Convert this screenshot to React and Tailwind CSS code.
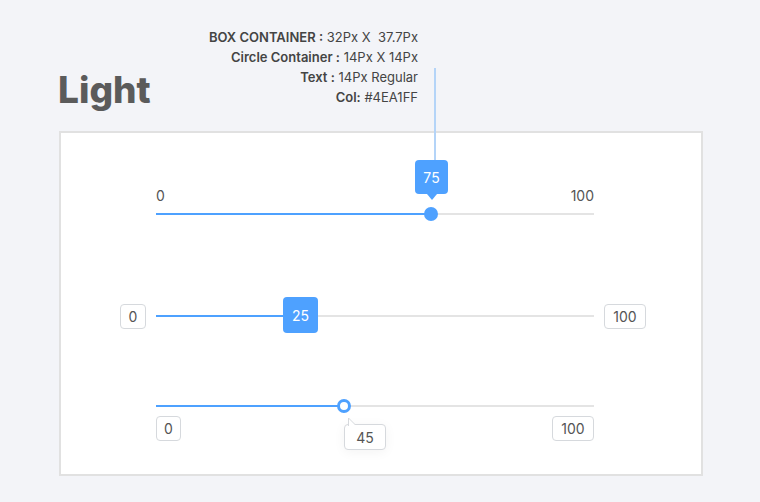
import React from "react";

const BLUE = "bg-[#4EA1FF]";

const ValueBox = ({ children, className = "" }) => (
  <div
    className={`h-[25px] px-[7px] flex items-center justify-center rounded-[4px] border border-[#d6d9dd] bg-white text-[14px] text-[#555] ${className}`}
  >
    {children}
  </div>
);

const App = () => {
  return (
    <div
      className="w-[760px] h-[502px] bg-[#f3f4f8] relative overflow-hidden"
      style={{ fontFamily: "Inter, 'Open Sans', sans-serif" }}
    >
      {/* connector line from the annotation to the first tooltip */}
      <div className="absolute left-[434px] top-[68px] w-[2px] h-[94px] bg-[#b4d4f8]" />

      {/* header */}
      <div className="flex items-start w-[418px] pl-[58px] pt-[27px] h-[131px]">
        <h1 className="mt-[43px] text-[37px] leading-[40px] font-extrabold text-[#5b5b5b]">
          Light
        </h1>
        <div className="ml-auto text-right text-[13px] leading-[20px] text-[#444]">
          <p>
            <span className="font-semibold">BOX CONTAINER :</span> 32Px X&nbsp; 37.7Px
          </p>
          <p>
            <span className="font-semibold">Circle Container :</span> 14Px X 14Px
          </p>
          <p>
            <span className="font-semibold">Text :</span> 14Px Regular
          </p>
          <p>
            <span className="font-semibold">Col:</span> #4EA1FF
          </p>
        </div>
      </div>

      {/* card */}
      <div className="ml-[59px] w-[644px] h-[345px] border-2 border-[#e1e1e1] bg-white pt-[52px]">
        {/* slider 1 */}
        <div className="ml-[95px] w-[438px]">
          <div className="flex justify-between h-[22px] text-[14px] leading-[22px] text-[#555]">
            <span>0</span>
            <span>100</span>
          </div>
          <div className="relative mt-[6px] h-[2px] bg-[#e4e4e4]">
            <div className={`h-full w-[275px] ${BLUE}`} />
            <div className={`absolute left-[268px] top-[-6px] w-[14px] h-[14px] rounded-full ${BLUE}`} />
            <div className="absolute left-[259px] top-[-53px] flex flex-col items-center">
              <div className={`w-[33px] h-[34px] rounded-[4px] ${BLUE} flex items-center justify-center text-[14px] text-white`}>
                75
              </div>
              <div className="w-0 h-0 border-l-[5px] border-r-[5px] border-t-[6px] border-l-transparent border-r-transparent border-t-[#4EA1FF]" />
            </div>
          </div>
        </div>

        {/* slider 2 */}
        <div className="mt-[83px] ml-[59px] flex items-center h-[36px]">
          <ValueBox className="w-[26px]">0</ValueBox>
          <div className="relative mx-[10px] w-[438px] h-[2px] bg-[#e4e4e4]">
            <div className={`h-full w-[130px] ${BLUE}`} />
            <div
              className={`absolute left-[127px] top-[-18px] w-[35px] h-[36px] rounded-[4px] ${BLUE} flex items-center justify-center text-[14px] text-white`}
            >
              25
            </div>
          </div>
          <ValueBox className="w-[42px]">100</ValueBox>
        </div>

        {/* slider 3 */}
        <div className="mt-[71px] ml-[95px] w-[438px]">
          <div className="relative h-[2px] bg-[#e4e4e4]">
            <div className={`h-full w-[188px] ${BLUE}`} />
            <div className="absolute left-[181px] top-[-6px] w-[14px] h-[14px] rounded-full border-[3px] border-[#4EA1FF] bg-white" />
            <div className="absolute left-[188px] top-[19px]">
              <div className="relative w-[42px] h-[26px] rounded-[4px] border border-[#d6d9dd] bg-white shadow-[0_2px_12px_rgba(0,0,0,0.05)] flex items-center justify-center text-[14px] text-[#555]">
                45
              </div>
              <svg className="absolute left-[3px] top-[-7px]" width="10" height="9" viewBox="0 0 10 9">
                <path d="M1.5 9 V1 L8.5 8" fill="#fff" stroke="#d6d9dd" strokeWidth="1" />
                <rect x="2" y="8" width="6" height="1.5" fill="#fff" />
              </svg>
            </div>
          </div>
          <div className="mt-[9px] flex justify-between">
            <ValueBox className="w-[25px]">0</ValueBox>
            <ValueBox className="w-[42px]">100</ValueBox>
          </div>
        </div>
      </div>
    </div>
  );
};

export default App;
